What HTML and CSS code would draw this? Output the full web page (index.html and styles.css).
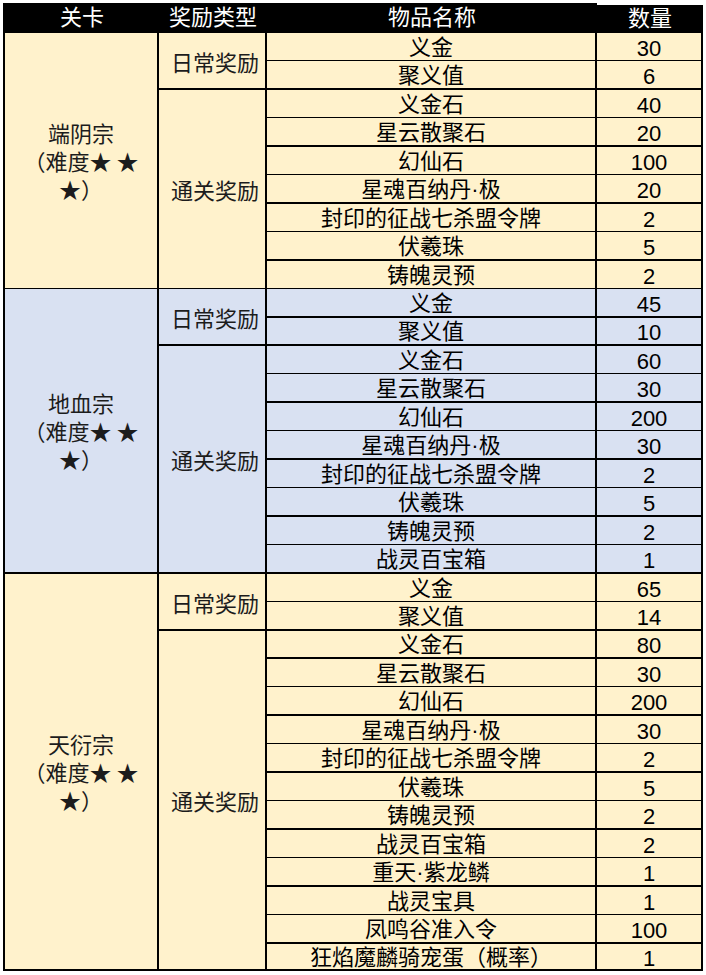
FILE: index.html
```html
<!DOCTYPE html>
<html lang="zh-CN">
<head>
<meta charset="utf-8">
<title>关卡奖励</title>
<link rel="stylesheet" href="styles.css">
</head>
<body>
<div class="sheet">
  <div class="hd">关卡</div>
  <div class="hd">奖励类型</div>
  <div class="hd">物品名称</div>
  <div class="hd hd-qty">数量</div>

  <div class="group cream">
    <div class="level span9 thin-end"><span>端阴宗</span><span>（难度★ ★</span><span>★）</span></div>
    <div class="type span2">日常奖励</div>
    <div class="row thin"><div class="name">义金</div><div class="qty">30</div></div>
    <div class="row"><div class="name">聚义值</div><div class="qty">6</div></div>
    <div class="type span7 thin-end">通关奖励</div>
    <div class="row thin"><div class="name">义金石</div><div class="qty">40</div></div>
    <div class="row"><div class="name">星云散聚石</div><div class="qty">20</div></div>
    <div class="row thin"><div class="name">幻仙石</div><div class="qty">100</div></div>
    <div class="row"><div class="name">星魂百纳丹·极</div><div class="qty">20</div></div>
    <div class="row thin"><div class="name">封印的征战七杀盟令牌</div><div class="qty">2</div></div>
    <div class="row"><div class="name">伏羲珠</div><div class="qty">5</div></div>
    <div class="row thin"><div class="name">铸魄灵预</div><div class="qty">2</div></div>
  </div>

  <div class="group blue">
    <div class="level span10"><span>地血宗</span><span>（难度★ ★</span><span>★）</span></div>
    <div class="type span2">日常奖励</div>
    <div class="row"><div class="name">义金</div><div class="qty">45</div></div>
    <div class="row"><div class="name">聚义值</div><div class="qty">10</div></div>
    <div class="type span8">通关奖励</div>
    <div class="row thin"><div class="name">义金石</div><div class="qty">60</div></div>
    <div class="row"><div class="name">星云散聚石</div><div class="qty">30</div></div>
    <div class="row thin"><div class="name">幻仙石</div><div class="qty">200</div></div>
    <div class="row"><div class="name">星魂百纳丹·极</div><div class="qty">30</div></div>
    <div class="row thin"><div class="name">封印的征战七杀盟令牌</div><div class="qty">2</div></div>
    <div class="row"><div class="name">伏羲珠</div><div class="qty">5</div></div>
    <div class="row thin"><div class="name">铸魄灵预</div><div class="qty">2</div></div>
    <div class="row"><div class="name">战灵百宝箱</div><div class="qty">1</div></div>
  </div>

  <div class="group cream">
    <div class="level span14"><span>天衍宗</span><span>（难度★ ★</span><span>★）</span></div>
    <div class="type span2">日常奖励</div>
    <div class="row thin"><div class="name">义金</div><div class="qty">65</div></div>
    <div class="row"><div class="name">聚义值</div><div class="qty">14</div></div>
    <div class="type span12">通关奖励</div>
    <div class="row"><div class="name">义金石</div><div class="qty">80</div></div>
    <div class="row thin"><div class="name">星云散聚石</div><div class="qty">30</div></div>
    <div class="row"><div class="name">幻仙石</div><div class="qty">200</div></div>
    <div class="row thin"><div class="name">星魂百纳丹·极</div><div class="qty">30</div></div>
    <div class="row"><div class="name">封印的征战七杀盟令牌</div><div class="qty">2</div></div>
    <div class="row thin"><div class="name">伏羲珠</div><div class="qty">5</div></div>
    <div class="row"><div class="name">铸魄灵预</div><div class="qty">2</div></div>
    <div class="row thin"><div class="name">战灵百宝箱</div><div class="qty">2</div></div>
    <div class="row"><div class="name">重天·紫龙鳞</div><div class="qty">1</div></div>
    <div class="row thin"><div class="name">战灵宝具</div><div class="qty">1</div></div>
    <div class="row"><div class="name">凤鸣谷准入令</div><div class="qty">100</div></div>
    <div class="row"><div class="name">狂焰魔麟骑宠蛋（概率）</div><div class="qty">1</div></div>
  </div>
</div>
</body>
</html>
```
FILE: styles.css
```css
html, body {
  margin: 0;
  padding: 0;
  background: #fff;
}

.sheet {
  display: grid;
  grid-template-columns: 154px 108px 330px 106px;
  grid-template-rows:
    30px
    repeat(5, 28px 29px) 28px
    repeat(5, 28px 29px) 28px
    repeat(5, 28px 29px) 27px;
  width: 698px;
  margin: 3px 0 0 3px;
  border-left: 2px solid #000;
  font-family: "Liberation Sans", "Noto Sans CJK SC", sans-serif;
  font-size: 22px;
  color: #000;
}

.hd {
  background: #000;
  color: #fff;
  display: flex;
  align-items: center;
  justify-content: center;
  line-height: 1;
  box-sizing: border-box;
}

.hd-qty {
  border-top: 2px solid #fff;
}

.group,
.row {
  display: contents;
}

.level,
.type,
.name,
.qty {
  box-sizing: border-box;
  display: flex;
  align-items: center;
  justify-content: center;
  text-align: center;
  border-right: 2px solid #000;
  border-bottom: 2px solid #000;
  line-height: 1;
  white-space: nowrap;
}

.cream .level,
.cream .type,
.cream .name,
.cream .qty {
  background: #fff2cc;
}

.blue .level,
.blue .type,
.blue .name,
.blue .qty {
  background: #d9e1f2;
}

.level {
  grid-column: 1;
  flex-direction: column;
  gap: 6px;
  font-family: "Noto Sans CJK SC", sans-serif;
  line-height: 22px;
  color: #1c1c1c;
  padding-bottom: 2px;
}

.type {
  grid-column: 2;
  font-family: "Noto Sans CJK SC", sans-serif;
  color: #1c1c1c;
  padding-left: 6px;
}

.name {
  grid-column: 3;
  padding-top: 2px;
}

.qty {
  grid-column: 4;
  padding-top: 4px;
}

.row.thin > .name,
.row.thin > .qty,
.thin-end {
  border-bottom-width: 1px;
}

.span2 { grid-row: span 2; }
.span7 { grid-row: span 7; }
.span8 { grid-row: span 8; }
.span9 { grid-row: span 9; }
.span10 { grid-row: span 10; }
.span12 { grid-row: span 12; }
.span14 { grid-row: span 14; }
```
